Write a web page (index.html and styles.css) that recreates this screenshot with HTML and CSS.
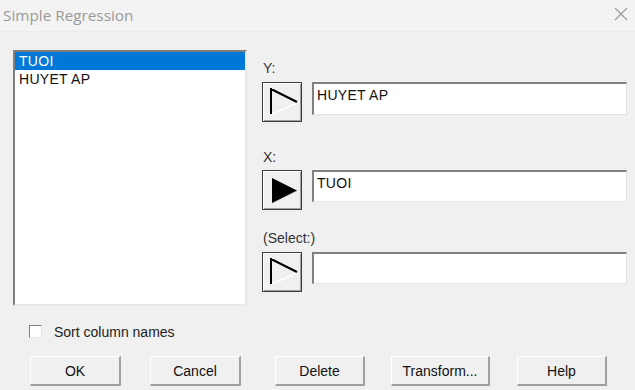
FILE: index.html
```html
<!DOCTYPE html>
<html>
<head>
<meta charset="utf-8">
<link rel="stylesheet" href="styles.css">
</head>
<body>
<div class="window">
  <div class="titlebar">
    <span class="title">Simple Regression</span>
    <svg class="close" width="14" height="14" viewBox="0 0 14 14"><path d="M1 1 L13 13 M13 1 L1 13" stroke="#9a9a9a" stroke-width="1.2" fill="none"/></svg>
  </div>
  <div class="main">
    <div class="left">
      <div class="listbox">
        <div class="item selected">TUOI</div>
        <div class="item">HUYET AP</div>
      </div>
      <label class="check"><span class="box"></span><span>Sort column names</span></label>
    </div>
    <div class="right">
      <div class="field field-y">
        <div class="label">Y:</div>
        <div class="row">
          <button class="pick"><svg width="38" height="38" viewBox="0 0 38 38"><path d="M9 31 L34 20" stroke="#ffffff" stroke-width="1.5" fill="none"/><path d="M8 5 L8 31 M8 6 L34 19" stroke="#000" stroke-width="2" fill="none"/></svg></button>
          <div class="input">HUYET AP</div>
        </div>
      </div>
      <div class="field field-x">
        <div class="label">X:</div>
        <div class="row">
          <button class="pick"><svg width="38" height="38" viewBox="0 0 38 38"><path d="M9 32 L34 19.5" stroke="#d8d8d8" stroke-width="1.5" fill="none"/><polygon points="9,7 34,19.5 9,32" fill="#000"/></svg></button>
          <div class="input">TUOI</div>
        </div>
      </div>
      <div class="field field-s">
        <div class="label">(Select:)</div>
        <div class="row">
          <button class="pick"><svg width="38" height="38" viewBox="0 0 38 38"><path d="M9 31 L34 20" stroke="#ffffff" stroke-width="1.5" fill="none"/><path d="M8 5 L8 31 M8 6 L34 19" stroke="#000" stroke-width="2" fill="none"/></svg></button>
          <div class="input"></div>
        </div>
      </div>
    </div>
  </div>
  <div class="buttons">
    <button class="btn btn-ok">OK</button>
    <button class="btn btn-cancel">Cancel</button>
    <button class="btn btn-delete">Delete</button>
    <button class="btn btn-transform">Transform...</button>
    <button class="btn btn-help">Help</button>
  </div>
</div>
</body>
</html>
```
FILE: styles.css
```css
* { box-sizing: border-box; }
html, body { margin: 0; padding: 0; }
body {
  width: 635px;
  height: 390px;
  background: #f0f0f0;
  font-family: "Liberation Sans", Arial, sans-serif;
  font-size: 14px;
  color: #000;
  overflow: hidden;
}
.window { width: 635px; height: 390px; }
.titlebar {
  height: 32px;
  background: #f3f3f3;
  display: flex;
  align-items: center;
  justify-content: space-between;
  padding: 0 7px 1px 3px;
  border-bottom: 1px solid #ececec;
}
.title {
  font-family: "Open Sans", "Noto Sans", sans-serif;
  font-size: 15.3px;
  color: #999;
}
.close { display: block; margin-top: -2px; }
.main {
  display: flex;
  padding-left: 13px;
}
.left {
  width: 234px;
  padding-top: 18px;
}
.listbox {
  width: 234px;
  height: 256px;
  background: #fff;
  border-top: 2px solid #808080;
  border-left: 2px solid #808080;
  border-right: 2px solid #e8e8e8;
  border-bottom: 2px solid #e8e8e8;
}
.item {
  height: 18px;
  line-height: 18px;
  padding-left: 4px;
  white-space: nowrap;
  letter-spacing: 0.3px;
  color: #111;
}
.item.selected { background: #0078d7; color: #fff; }
.check {
  display: flex;
  align-items: center;
  margin-top: 19px;
  padding-left: 16px;
  height: 13px;
  color: #222;
}
.box {
  width: 13px;
  height: 13px;
  background: #fff;
  border-top: 1px solid #808080;
  border-left: 1px solid #808080;
  border-right: 1px solid #e3e3e3;
  border-bottom: 1px solid #e3e3e3;
  margin-right: 12px;
  flex: none;
}
.right {
  margin-left: 15px;
  width: 365px;
  padding-top: 28px;
}
.label {
  height: 16px;
  line-height: 16px;
  padding-left: 1px;
  color: #333;
}
.row {
  display: flex;
  gap: 10px;
  margin-top: 6px;
}
.field-x { margin-top: 27px; }
.field-x .row { margin-top: 5px; }
.field-s { margin-top: 20px; }
.pick {
  width: 40px;
  height: 40px;
  padding: 0;
  margin: 0;
  background: #f0f0f0;
  border: 1px solid #3c3c3c;
  box-shadow: inset 1px 1px 0 #ffffff, inset -1px -1px 0 #a0a0a0;
  flex: none;
}
.pick svg { display: block; }
.input {
  width: 315px;
  height: 33px;
  background: #fff;
  border-top: 2px solid #808080;
  border-left: 2px solid #808080;
  border-right: 1px solid #e3e3e3;
  border-bottom: 1px solid #e3e3e3;
  padding: 2px 3px;
  line-height: 18px;
  letter-spacing: 0.3px;
  color: #111;
}
.field-x .input { height: 32px; }
.field-s .input { height: 32px; }
.buttons {
  display: flex;
  margin-top: 18px;
  padding-left: 30px;
}
.btn {
  height: 30px;
  margin: 0;
  padding: 0;
  font-family: "Liberation Sans", Arial, sans-serif;
  font-size: 14px;
  color: #111;
  background: #f0f0f0;
  border-top: 1px solid #fff;
  border-left: 1px solid #fff;
  border-right: 2px solid #a0a0a0;
  border-bottom: 2px solid #a0a0a0;
}
.btn-ok { width: 91px; }
.btn-cancel { width: 91px; margin-left: 29px; }
.btn-delete { width: 90px; margin-left: 34px; }
.btn-transform { width: 99px; margin-left: 26px; }
.btn-help { width: 90px; margin-left: 27px; }
```
